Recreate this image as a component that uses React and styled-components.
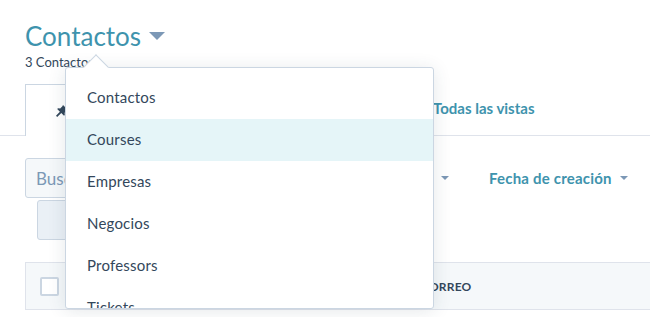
import React from 'react'
import styled, { createGlobalStyle } from 'styled-components'

const GlobalStyle = createGlobalStyle`
  body {
    margin: 0;
    background: #ffffff;
    font-family: Lato, "Open Sans", sans-serif;
    color: #33475b;
    overflow: hidden;
  }
`

const Page = styled.div`
  position: relative;
  width: 650px;
  height: 317px;
  overflow: hidden;
`

const Header = styled.div`
  padding: 18px 25px 0;
`

const TitleRow = styled.div`
  display: flex;
  align-items: center;
  gap: 8px;
`

const Title = styled.h1`
  margin: 0;
  font-size: 26px;
  font-weight: 400;
  line-height: 36px;
  color: #3e93ad;
`

const Caret = styled.span`
  display: inline-block;
  flex-shrink: 0;
  width: 0;
  height: 0;
  border-left: ${p => p.size}px solid transparent;
  border-right: ${p => p.size}px solid transparent;
  border-top: ${p => p.size}px solid ${p => p.color};
`

const Count = styled.div`
  font-size: 13px;
  line-height: 16px;
  color: #33475b;
`

const TabBar = styled.div`
  display: flex;
  align-items: flex-end;
  margin-top: 14px;
  height: 51px;
  border-bottom: 1px solid #dfe3eb;
  padding-left: 25px;
`

const Tab = styled.div`
  display: flex;
  align-items: center;
  box-sizing: border-box;
  width: ${p => p.width}px;
  height: 52px;
  margin-bottom: -1px;
  padding-left: 30px;
  border: 1px solid #cbd6e2;
  border-bottom: none;
  background: #ffffff;
`

const TabLink = styled.div`
  margin-left: ${p => p.offset}px;
  align-self: center;
  margin-top: -3px;
  font-size: 15px;
  font-weight: 700;
  white-space: nowrap;
  color: #3e93ad;
`

const Toolbar = styled.div`
  display: flex;
  align-items: center;
  padding: 22px 25px 0;
  height: 40px;
`

const Search = styled.div`
  box-sizing: border-box;
  flex-shrink: 0;
  width: 220px;
  height: 40px;
  border: 1px solid #cbd6e2;
  border-radius: 3px;
  background: #f5f8fa;
  display: flex;
  align-items: center;
  padding-left: 10px;
  font-size: 17px;
  color: #7c98b6;
`

const Filter = styled.div`
  display: flex;
  align-items: center;
  flex-shrink: 0;
  gap: 8px;
  margin-left: ${p => p.offset}px;
  font-size: 15px;
  font-weight: 700;
  letter-spacing: 0.2px;
  white-space: nowrap;
  color: #3e93ad;
`

const ButtonRow = styled.div`
  padding: 2px 0 0 37px;
`

const GreyButton = styled.div`
  box-sizing: border-box;
  width: 120px;
  height: 40px;
  border: 1px solid #cbd6e2;
  border-radius: 3px;
  background: #eaf0f6;
`

const TableHead = styled.div`
  margin: 22px 0 0 25px;
  height: 48px;
  box-sizing: border-box;
  border-top: 1px solid #dfe3eb;
  border-bottom: 1px solid #dfe3eb;
  border-left: 1px solid #dfe3eb;
  background: #f5f8fa;
  display: flex;
  align-items: center;
`

const Checkbox = styled.div`
  box-sizing: border-box;
  width: 19px;
  height: 19px;
  margin-left: 14px;
  border: 2px solid #cbd6e2;
  border-radius: 2px;
  background: #ffffff;
`

const HeadCell = styled.div`
  margin-left: ${p => p.offset}px;
  font-size: 12px;
  font-weight: 700;
  color: #33475b;
  letter-spacing: 0.2px;
`

const Dropdown = styled.div`
  position: absolute;
  left: 65px;
  top: 67px;
  width: 369px;
  height: 242px;
  box-sizing: border-box;
  background: #ffffff;
  border: 1px solid #cbd6e2;
  border-radius: 3px;
  box-shadow: 0 2px 18px rgba(45, 62, 80, 0.12);
  padding-top: 9px;
`

const Arrow = styled.div`
  position: absolute;
  left: 21px;
  top: -10px;
  width: 17px;
  height: 17px;
  background: #ffffff;
  border-left: 1px solid #cbd6e2;
  border-top: 1px solid #cbd6e2;
  transform: rotate(45deg);
`

const Items = styled.div`
  height: 231px;
  overflow: hidden;
  position: relative;
`

const Item = styled.div`
  height: 42px;
  display: flex;
  align-items: center;
  padding-left: 21px;
  padding-bottom: 2px;
  box-sizing: border-box;
  font-size: 15px;
  letter-spacing: 0.2px;
  color: #33475b;
  background: ${p => (p.selected ? '#e5f5f8' : 'transparent')};
`

const PinIcon = () => (
  <svg width="12" height="12" viewBox="0 0 12 12">
    <path d="M7 0 L12 5 L10.8 5.6 L8.6 7.8 L8.8 10 L8 10.8 L5.3 8.1 L1.2 12 L0 10.8 L3.9 6.7 L1.2 4 L2 3.2 L4.2 3.4 L6.4 1.2 Z" fill="#33475b" />
  </svg>
)

const objects = ['Contactos', 'Courses', 'Empresas', 'Negocios', 'Professors', 'Tickets']

export default function App() {
  return (
    <Page>
      <GlobalStyle />
      <Header>
        <TitleRow>
          <Title>Contactos</Title>
          <Caret size={8} color="#7c98b6" />
        </TitleRow>
        <Count>3 Contactos</Count>
      </Header>
      <TabBar>
        <Tab width={120}>
          <PinIcon />
        </Tab>
        <TabLink offset={288}>Todas las vistas</TabLink>
      </TabBar>
      <Toolbar>
        <Search>Buscar</Search>
        <Filter offset={196}><Caret size={4} color="#7c98b6" /></Filter>
        <Filter offset={40}>Fecha de creación <Caret size={4} color="#7c98b6" /></Filter>
      </Toolbar>
      <ButtonRow>
        <GreyButton />
      </ButtonRow>
      <TableHead>
        <Checkbox />
        <HeadCell offset={362}>CORREO</HeadCell>
      </TableHead>
      <Dropdown>
        <Arrow />
        <Items>
          {objects.map((name, i) => (
            <Item key={name} selected={i === 1}>{name}</Item>
          ))}
        </Items>
      </Dropdown>
    </Page>
  )
}
